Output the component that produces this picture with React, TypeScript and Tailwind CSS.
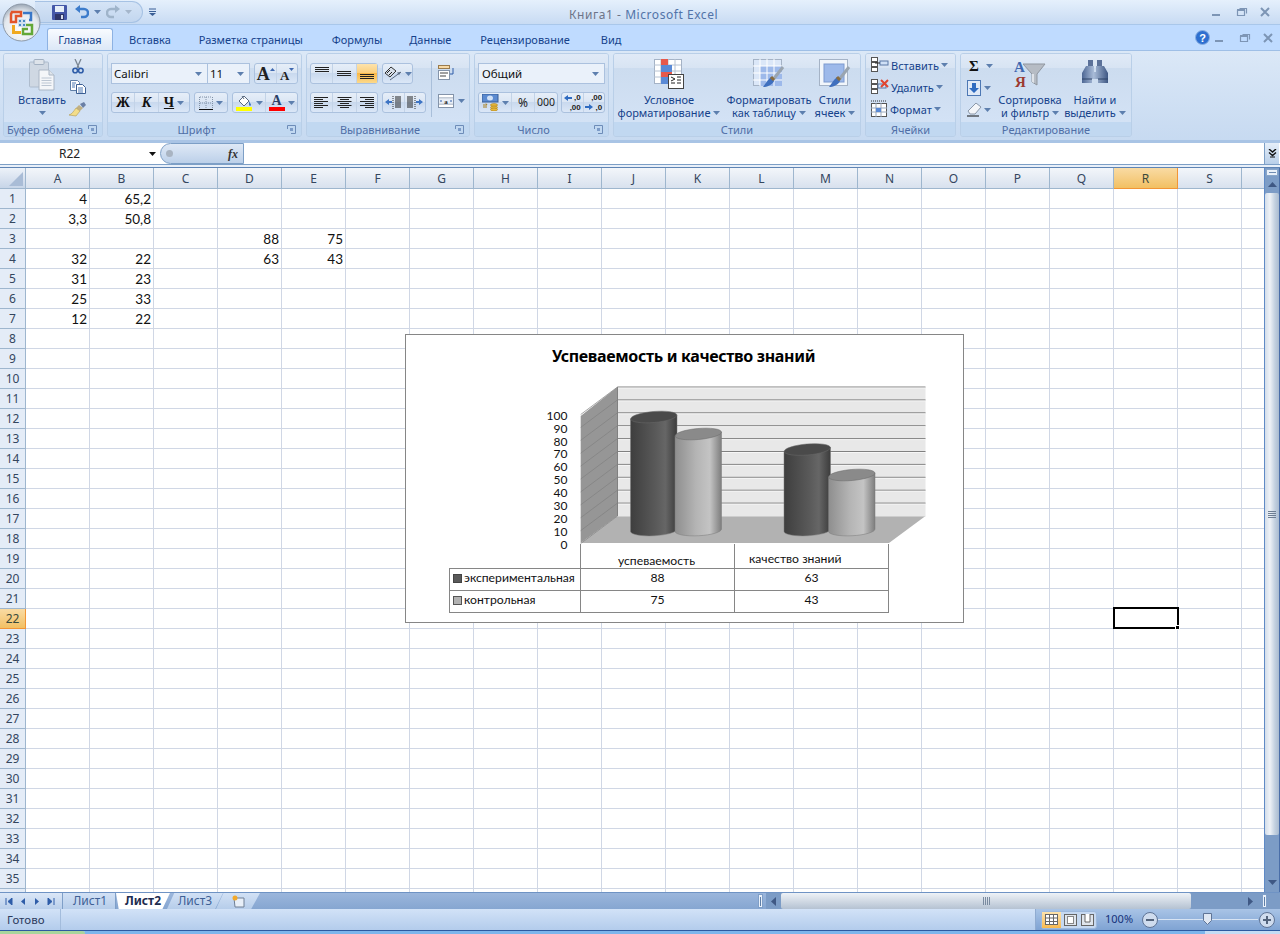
import React from "react";

const columns = "ABCDEFGHIJKLMNOPQRST".split("");
const rows = Array.from({ length: 36 }, (_, i) => i + 1);

// значения ячеек
const cells: Record<string, string> = {
  A1: "4", B1: "65,2",
  A2: "3,3", B2: "50,8",
  D3: "88", E3: "75",
  A4: "32", B4: "22", D4: "63", E4: "43",
  A5: "31", B5: "23",
  A6: "25", B6: "33",
  A7: "12", B7: "22",
};

function Caret({ color = "#5d7fae" }: { color?: string }) {
  return (
    <svg width="7" height="4" viewBox="0 0 7 4" className="shrink-0">
      <path d="M0 0h7L3.5 4z" fill={color} />
    </svg>
  );
}

function Launcher() {
  return (
    <svg width="9" height="9" viewBox="0 0 9 9" className="absolute right-[5px] top-[3px]">
      <path d="M.5 4V.5H8.5V8.5H4" fill="none" stroke="#6d8cb8" />
      <rect x="3" y="3" width="3" height="3" fill="#7d9cc8" />
    </svg>
  );
}

function Group({ w, label, launcher, children }: { w: string; label: string; launcher?: boolean; children: React.ReactNode }) {
  return (
    <div className={`${w} h-[84px] shrink-0 flex flex-col rounded-[3px] border border-[#b9cfe8] overflow-hidden`}>
      <div className="h-[68px] shrink-0 bg-[linear-gradient(to_bottom,#e0eaf7_0%,#d8e4f3_20%,#ccdcef_21%,#d3e2f5_100%)]">
        {children}
      </div>
      <div className={`relative flex-1 bg-[#c1d8f1] text-center text-[11px] leading-[15px] text-[#4f6ea6] ${launcher ? "pr-[16px]" : ""}`}>
        {label}
        {launcher && <Launcher />}
      </div>
    </div>
  );
}

function BtnGroup({ className = "", children }: { className?: string; children: React.ReactNode }) {
  return (
    <div className={`h-[21px] flex items-stretch rounded-[3px] border border-[#abc1de] bg-[linear-gradient(to_bottom,#e6eef8_0%,#dbe6f4_45%,#c9d9ee_50%,#dbe7f7_100%)] ${className}`}>
      {children}
    </div>
  );
}

function Cell({ w, active, children }: { w: string; active?: boolean; children: React.ReactNode }) {
  return (
    <div
      className={`${w} flex items-center justify-center gap-[3px] border-r border-[#c3d3e7] last:border-r-0 ${
        active ? "bg-[linear-gradient(to_bottom,#fde3ac_0%,#fbd07f_45%,#f9b848_50%,#fcd98c_100%)]" : ""
      }`}
    >
      {children}
    </div>
  );
}

// линии выравнивания
function Lines({ widths, offset = 0 }: { widths: number[]; offset?: number }) {
  return (
    <svg width="14" height="13" viewBox="0 0 14 13">
      {widths.map((w, i) => (
        <rect key={i} x={(14 - w) / 2} y={offset + i * 2} width={w} height="1" fill="#222" />
      ))}
    </svg>
  );
}

function AlignH({ side }: { side: "l" | "c" | "r" }) {
  const ws = [14, 9, 14, 9, 14, 9];
  return (
    <svg width="15" height="13" viewBox="0 0 15 13">
      {ws.map((w, i) => (
        <rect key={i} x={side === "l" ? 0 : side === "r" ? 15 - w : (15 - w) / 2} y={i * 2 + 1} width={w} height="1" fill="#222" />
      ))}
    </svg>
  );
}

function Indent({ flip }: { flip?: boolean }) {
  return (
    <svg width="16" height="15" viewBox="0 0 16 15">
      <g transform={flip ? "translate(16 0) scale(-1 1)" : undefined}>
        <path d="M8 1v13" stroke="#333" strokeDasharray="1 1" />
        <path d="M10 2h6M10 4h6M10 6h6M10 8h6M10 10h6M10 12h6" stroke="#222" />
        <path d="M0 7l4-3v2h3v2H4v2z" fill="#3d74c4" />
      </g>
    </svg>
  );
}

function Paste() {
  return (
    <svg width="26" height="32" viewBox="0 0 26 32">
      <rect x="0.5" y="3" width="19" height="25" rx="1" fill="#cfd8e3" stroke="#aebccd" />
      <rect x="5" y="0.5" width="10" height="5" rx="1" fill="#dde3ea" stroke="#a3b1c2" />
      <path d="M10 11h10l5 5v15H10z" fill="#f4f6f9" stroke="#aab6c5" />
      <path d="M20 11v5h5" fill="#dfe5ec" stroke="#aab6c5" />
      <path d="M12.500 19h10M12.500 21.500h10M12.500 24h10M12.500 26.500h10" stroke="#bcc6d3" />
    </svg>
  );
}

function Scissors() {
  return (
    <svg width="12" height="15" viewBox="0 0 12 15">
      <path d="M3 0l4 9M9 0L5 9" stroke="#7b8794" strokeWidth="1.300" />
      <circle cx="3.200" cy="11.500" r="2.300" fill="none" stroke="#2f5da8" strokeWidth="1.600" />
      <circle cx="8.800" cy="11.500" r="2.300" fill="none" stroke="#2f5da8" strokeWidth="1.600" />
    </svg>
  );
}

function CopyIcon() {
  return (
    <svg width="16" height="14" viewBox="0 0 16 14">
      <path d="M.5.500h7l2 2v8h-9z" fill="#fff" stroke="#5f7fa8" />
      <path d="M6.500 4.500h6l3 3v6h-9z" fill="#fff" stroke="#3c5f93" />
      <path d="M2 3h4M2 5h3M2 7h3M8 8h5M8 10h5M8 12h5" stroke="#4d78b4" />
    </svg>
  );
}

function Brush() {
  return (
    <svg width="17" height="15" viewBox="0 0 17 15">
      <path d="M11 2l4-2 2 3-3 3z" fill="#6a7fa5" />
      <path d="M10 3l4 3-3 3-4-3z" fill="#c0b084" />
      <path d="M7 6l4 3-4 5-7-1c3-1 4-3 7-7z" fill="#f3dd8a" stroke="#b29a4f" strokeWidth=".6" />
    </svg>
  );
}

function Borders() {
  return (
    <svg width="14" height="14" viewBox="0 0 14 14">
      <path d="M.5 1v12M7 1v12M13.500 1v12M1 1h12M1 7h12" stroke="#8292a7" strokeDasharray="1 1" />
      <path d="M0 13.500h14" stroke="#111" />
    </svg>
  );
}

function FillColor() {
  return (
    <svg width="17" height="17" viewBox="0 0 17 17">
      <path d="M3 7l5-5 5 5-5 5z" fill="#fff" stroke="#5a6a80" />
      <path d="M6 2l2 3" stroke="#5a6a80" />
      <path d="M13 7c1 2 2 3 2 4s-2 1-2 0z" fill="#3d74c4" />
      <rect x="0" y="13" width="16" height="4" fill="#ffff00" />
    </svg>
  );
}

function RotateIcon() {
  return (
    <svg width="18" height="15" viewBox="0 0 18 15">
      <path d="M1 7l6-6 5 4-6 6z" fill="#d7dfe9" stroke="#333" />
      <path d="M3 7l3-3M5 9l3-3" stroke="#222" />
      <path d="M6 14L17 6" stroke="#5a6a80" />
      <path d="M17 6l-4 .5 2 2.500z" fill="#5a6a80" />
    </svg>
  );
}

function WrapIcon() {
  return (
    <svg width="16" height="15" viewBox="0 0 16 15">
      <rect x="0.500" y="0.500" width="11" height="3" fill="#f7d9a5" stroke="#9a7b4d" />
      <rect x="0.500" y="5.500" width="11" height="9" fill="#fff" stroke="#8494aa" />
      <path d="M2 8h8M2 11h6" stroke="#444" />
      <path d="M15 3v6h-3" fill="none" stroke="#2f5da8" />
    </svg>
  );
}

function MergeIcon() {
  return (
    <svg width="16" height="14" viewBox="0 0 16 14">
      <rect x="0.500" y="0.500" width="15" height="13" fill="#fff" stroke="#8494aa" />
      <path d="M0 4h16M0 10h16" stroke="#8494aa" />
      <rect x="1" y="4.500" width="14" height="5" fill="#e8eef6" />
      <text x="8" y="9.500" textAnchor="middle" fontSize="7" fontWeight="700" fontFamily="Liberation Serif" fill="#222">a</text>
      <path d="M2 7h2M12 7h2" stroke="#2f5da8" />
    </svg>
  );
}

function MoneyIcon() {
  return (
    <svg width="17" height="17" viewBox="0 0 17 17">
      <rect x="0" y="0" width="16" height="8" fill="#5b8ad0" stroke="#365c96" />
      <ellipse cx="8" cy="4" rx="3" ry="2.500" fill="#cfe0f6" />
      <ellipse cx="12" cy="11" rx="3.500" ry="1.500" fill="#e8b83a" stroke="#a77f1d" strokeWidth=".6" />
      <ellipse cx="12" cy="13.500" rx="3.500" ry="1.500" fill="#e8b83a" stroke="#a77f1d" strokeWidth=".6" />
      <ellipse cx="12" cy="15.500" rx="3.500" ry="1.500" fill="#e8b83a" stroke="#a77f1d" strokeWidth=".6" />
      <path d="M1 11h4l-1-1.500M1 13h4" stroke="#a77f1d" fill="none" />
    </svg>
  );
}

function DecimalIcon({ down }: { down?: boolean }) {
  return (
    <div className="relative w-[17px] h-[19px] font-['Liberation_Sans',sans-serif] text-[8px] leading-[9.500px] font-bold text-[#222] text-right">
      <div>{down ? ",00" : ",0"}</div>
      <div>{down ? ",0" : ",00"}</div>
      <svg width="8" height="6" viewBox="0 0 8 6" className={`absolute left-0 ${down ? "bottom-[2px]" : "top-[2px]"}`}>
        <path d={down ? "M8 3L4 0v2H0v2h4v2z" : "M0 3l4-3v2h4v2H4v2z"} fill="#2f6bc0" />
      </svg>
    </div>
  );
}

function CondFormat() {
  return (
    <svg width="30" height="30" viewBox="0 0 30 30">
      <rect x="0.500" y="0.500" width="27" height="24" fill="#fff" stroke="#a5b3c6" />
      <path d="M0 6h27M0 12h27M0 18h27M7 0v25M14 0v25M21 0v25" stroke="#b6c2d2" />
      <rect x="7" y="0" width="7" height="6" fill="#e8594b" />
      <rect x="7" y="6" width="11" height="7" fill="#5a8ad6" />
      <rect x="7" y="13" width="11" height="5" fill="#e8594b" />
      <rect x="7" y="18" width="7" height="7" fill="#5a8ad6" />
      <rect x="14.500" y="15.500" width="15" height="14" fill="#fff" stroke="#444" />
      <path d="M17 18l4 2-4 2M17 24h4M23 18h4M23 21h4M23 24h4" stroke="#222" fill="none" />
    </svg>
  );
}

function FormatTable() {
  return (
    <svg width="32" height="30" viewBox="0 0 32 30">
      <rect x="0.500" y="0.500" width="28" height="26" fill="#dbe7f8" stroke="#a5b3c6" />
      <rect x="7" y="7" width="22" height="20" fill="#9db9ea" />
      <path d="M0 7h29M0 14h29M0 21h29M7 0v27M14 0v27M21 0v27" stroke="#fff" />
      <path d="M30 8L19 22" stroke="#9aa5b0" strokeWidth="3" />
      <path d="M20 20l-2-2-3 3-5 7c4 0 9-2 11-6z" fill="#3f6fbe" />
      <path d="M18 18l3 3" stroke="#8a6c3e" strokeWidth="3" />
    </svg>
  );
}

function CellStyles() {
  return (
    <svg width="32" height="30" viewBox="0 0 32 30">
      <rect x="0.500" y="0.500" width="28" height="26" fill="#f2f6fb" stroke="#a5b3c6" />
      <rect x="5" y="5" width="20" height="18" fill="#9db9ea" stroke="#7d9ad0" />
      <path d="M30 8L19 22" stroke="#9aa5b0" strokeWidth="3" />
      <path d="M20 20l-2-2-3 3-5 7c4 0 9-2 11-6z" fill="#3f6fbe" />
      <path d="M18 18l3 3" stroke="#8a6c3e" strokeWidth="3" />
    </svg>
  );
}

function InsertIcon() {
  return (
    <svg width="18" height="16" viewBox="0 0 18 16">
      <rect x="0.500" y="0.500" width="6" height="4" fill="#fff" stroke="#555" />
      <rect x="0.500" y="5.500" width="6" height="4" fill="#fff" stroke="#555" />
      <rect x="0.500" y="10.500" width="6" height="4" fill="#fff" stroke="#555" />
      <rect x="9" y="4" width="8" height="4" fill="#cfe0f6" stroke="#5a78a6" />
      <path d="M4 6h5" stroke="#222" />
    </svg>
  );
}

function DeleteIcon() {
  return (
    <svg width="18" height="16" viewBox="0 0 18 16">
      <rect x="0.500" y="0.500" width="6" height="4" fill="#fff" stroke="#555" />
      <rect x="0.500" y="5.500" width="6" height="4" fill="#fff" stroke="#555" />
      <rect x="0.500" y="10.500" width="6" height="4" fill="#fff" stroke="#555" />
      <rect x="7" y="5" width="8" height="4" fill="#cfe0f6" stroke="#5a78a6" />
      <path d="M10 1l7 7M17 1l-7 7" stroke="#e2442f" strokeWidth="2" />
    </svg>
  );
}

function FormatIcon() {
  return (
    <svg width="17" height="18" viewBox="0 0 17 18">
      <path d="M0 1h16" stroke="#333" strokeDasharray="1 1" />
      <rect x="0.500" y="3.500" width="15" height="13" fill="#fff" stroke="#555" />
      <path d="M0 8h16M0 12h16M5 3v14M10 3v14" stroke="#98a7bb" />
      <rect x="5" y="8" width="5" height="4" fill="#5a8ad6" />
    </svg>
  );
}

function FillDown() {
  return (
    <svg width="14" height="16" viewBox="0 0 14 16">
      <rect x="0.500" y="0.500" width="13" height="15" fill="#dfe9f7" stroke="#4d78b4" />
      <path d="M5 3h4v5h3l-5 5-5-5h3z" fill="#2f6bc0" />
    </svg>
  );
}

function Eraser() {
  return (
    <svg width="15" height="14" viewBox="0 0 15 14">
      <path d="M9 0l5 4-6 7H3L1 8z" fill="#f4f6f9" stroke="#8a97a8" />
      <path d="M0 13h12" stroke="#111" />
    </svg>
  );
}

function SortIcon() {
  return (
    <svg width="32" height="30" viewBox="0 0 32 30">
      <path d="M9 5h22L23 15v11l-5-3v-8z" fill="#b6bcc4" stroke="#8f969f" />
      <path d="M18 15v8l2 1V15z" fill="#dfe3e8" />
      <text x="0" y="13" fontSize="15" fontWeight="700" fontFamily="Liberation Serif" fill="#3f68b0">A</text>
      <text x="1" y="28" fontSize="15" fontWeight="700" fontFamily="Liberation Serif" fill="#9c3a30">Я</text>
    </svg>
  );
}

function FindIcon() {
  return (
    <svg width="28" height="28" viewBox="0 0 28 28">
      <defs>
        <linearGradient id="bino" x1="0" x2="1">
          <stop offset="0" stopColor="#4d6794" />
          <stop offset=".45" stopColor="#a9bcd8" />
          <stop offset="1" stopColor="#3f5884" />
        </linearGradient>
      </defs>
      <rect x="7" y="1" width="5" height="6" fill="#5b7199" />
      <rect x="16" y="1" width="5" height="6" fill="#5b7199" />
      <path d="M5 7h8v6h2V7h8l4 7v10H17v-4h-6v4H1V14z" fill="url(#bino)" />
      <path d="M1 20h10M17 20h10" stroke="#2f4468" />
    </svg>
  );
}

function WinButtons({ close = "#7d95b5" }: { close?: string }) {
  return (
    <div className="flex items-center">
      <svg width="22" height="14" viewBox="0 0 22 14">
        <rect x="5" y="9" width="8" height="2" fill={close} />
      </svg>
      <svg width="23" height="14" viewBox="0 0 23 14" className="ml-[1px]">
        <path d="M7.500 5.500h7v5h-7z M9.500 3.500h7v5" fill="none" stroke={close} strokeWidth="1.200" />
        <rect x="7" y="4" width="8" height="2" fill={close} />
      </svg>
      <svg width="24" height="14" viewBox="0 0 24 14" className="ml-[1px]">
        <path d="M7 3l8 8M15 3l-8 8" stroke={close} strokeWidth="2" />
      </svg>
    </div>
  );
}

function OfficeButton() {
  return (
    <svg width="44" height="44" viewBox="0 0 44 44" className="absolute left-0 top-[1px]">
      <defs>
        <radialGradient id="orb" cx=".5" cy=".65" r=".65">
          <stop offset="0" stopColor="#ffffff" />
          <stop offset=".7" stopColor="#e3e8ee" />
          <stop offset="1" stopColor="#9aa6b4" />
        </radialGradient>
      </defs>
      <circle cx="21.500" cy="21.500" r="18.500" fill="url(#orb)" stroke="#8d99a8" />
      <path d="M12 11h9v4h-5v6h-5v-8z" fill="none" stroke="#e2552b" strokeWidth="2.500" />
      <path d="M23 12h8v7h-2" fill="none" stroke="#3a78c8" strokeWidth="2.500" />
      <path d="M12 24h3v6h6v3h-9z" fill="#f0a91f" />
      <path d="M24 24h8v9h-9v-5h5" fill="none" stroke="#63a838" strokeWidth="2.500" />
      <path d="M18 18h8v8h-8z" fill="#cfe0ef" />
      <path d="M19 19h2v2h-2zM23 19h2v2h-2zM19 23h2v2h-2zM23 23h2v2h-2z" fill="#4a8bc4" />
    </svg>
  );
}

function TitleBar() {
  return (
    <div className="relative h-[25px] shrink-0 flex items-center pl-[35px] bg-linear-to-b from-[#e5f0fc] to-[#c8dbf3] border-b border-[#a9c7ea]">
      <div className="h-[22px] w-[108px] flex items-center pl-[17px] rounded-r-[11px] bg-linear-to-b from-[#d5e4f6] to-[#c2d6ef] border border-l-0 border-[#a6c2e4]">
        <svg width="15" height="15" viewBox="0 0 15 15">
          <rect width="15" height="15" rx="1" fill="#4457a8" />
          <rect x="3" y="1" width="9" height="6" fill="#e6eef8" />
          <rect x="3" y="9" width="9" height="6" fill="#2e3568" />
          <rect x="9" y="10" width="2" height="4" fill="#d7dcea" />
        </svg>
        <svg width="14" height="14" viewBox="0 0 14 14" className="ml-[8px]">
          <path d="M3 4h6a4 4 0 0 1 0 8H6" fill="none" stroke="#3d7ccb" strokeWidth="2.500" />
          <path d="M0 4l5-4v8z" fill="#3d7ccb" />
        </svg>
        <span className="ml-[5px]"><Caret /></span>
        <svg width="14" height="14" viewBox="0 0 14 14" className="ml-[5px]">
          <path d="M11 4H5a4 4 0 0 0 0 8h3" fill="none" stroke="#9fb4ca" strokeWidth="2.500" />
          <path d="M14 4L9 0v8z" fill="#9fb4ca" />
        </svg>
        <span className="ml-[5px]"><Caret color="#a5b6cb" /></span>
      </div>
      <svg width="7" height="8" viewBox="0 0 7 8" className="ml-[6px]">
        <path d="M0 1h7M0 3.500h7" stroke="#3a5f96" />
        <path d="M0 5h7L3.500 8z" fill="#3a5f96" />
      </svg>
      <div className="ml-[413px] mt-[6px] w-[500px] text-[12px] tracking-[0.55px] text-[#6d7488] whitespace-pre">
        Книга1 - <span className="text-[#5273a8]">Microsoft Excel</span>
      </div>
      <div className="ml-auto pr-[2px]">
        <WinButtons />
      </div>
    </div>
  );
}

function TabStrip() {
  const tabs = [
    { t: "Вставка", m: "ml-[16px]" },
    { t: "Разметка страницы", m: "ml-[28px]" },
    { t: "Формулы", m: "ml-[29px]" },
    { t: "Данные", m: "ml-[27px]" },
    { t: "Рецензирование", m: "ml-[29px]" },
    { t: "Вид", m: "ml-[31px]" },
  ];
  return (
    <div className="h-[25px] shrink-0 flex items-end pl-[47px] bg-[#bfdbff] text-[11px] text-[#15428b]">
      <div className="h-[22px] w-[66px] pt-[2px] flex items-center justify-center rounded-t-[3px] border border-b-0 border-[#8db2e3] bg-linear-to-b from-[#f8fbff] to-[#dce8f7]">
        Главная
      </div>
      {tabs.map((tab) => (
        <div key={tab.t} className={`${tab.m} h-[22px] pt-[2px] flex items-center whitespace-nowrap`}>
          {tab.t}
        </div>
      ))}
      <div className="ml-auto -mr-[1px] h-[25px] flex items-center">
        <svg width="15" height="15" viewBox="0 0 15 15">
          <circle cx="7.500" cy="7.500" r="7" fill="#2e6fd0" stroke="#88aee0" />
          <text x="7.500" y="11.500" textAnchor="middle" fontSize="11" fontWeight="700" fontFamily="Liberation Sans" fill="#fff">?</text>
        </svg>
        <WinButtons />
      </div>
    </div>
  );
}

function Ribbon() {
  return (
    <div className="h-[90px] shrink-0 flex gap-[4px] pl-[3px] pt-[2px] border-t border-[#9fbfe6] bg-linear-to-b from-[#dbe8f7] to-[#c7daf1] text-[11px] leading-[13px] text-[#15428b]">
      <Group w="w-[100px]" label="Буфер обмена" launcher>
        <div className="flex h-full">
          <div className="w-[76px] shrink-0 flex flex-col items-center pt-[5px]">
            <Paste />
            <div className="mt-[2px]">Вставить</div>
            <div className="mt-[5px]"><Caret /></div>
          </div>
          <div className="-ml-[11px] flex flex-col items-center pt-[5px]">
            <Scissors />
            <div className="mt-[6px]"><CopyIcon /></div>
            <div className="mt-[8px]"><Brush /></div>
          </div>
        </div>
      </Group>

      <Group w="w-[195px]" label="Шрифт" launcher>
        <div className="pl-[3px] pt-[9px] flex flex-col gap-[8px]">
          <div className="flex">
            <div className="w-[97px] h-[21px] flex items-center justify-between pl-[2px] pr-[5px] border border-[#abc1de] bg-[#eaf1fa] text-[11.500px] text-[#111]">
              Calibri
              <Caret />
            </div>
            <div className="w-[42px] h-[21px] flex items-center justify-between pl-[2px] pr-[5px] border border-l-0 border-[#abc1de] bg-[#eaf1fa] text-[11.500px] text-[#111]">
              11
              <Caret />
            </div>
            <BtnGroup className="ml-[4px] w-[44px]">
              <Cell w="w-[23px]">
                <span className="font-['Liberation_Serif'] font-bold text-[18px] leading-[18px] text-[#222]">A</span>
                <svg width="5" height="3" viewBox="0 0 5 3" className="-ml-[3px] mb-[9px]"><path d="M0 3l2.500-3L5 3z" fill="#3f68b0" /></svg>
              </Cell>
              <Cell w="w-[20px]">
                <span className="font-['Liberation_Serif'] font-bold text-[13px] leading-[13px] mt-[3px] text-[#222]">A</span>
                <svg width="5" height="3" viewBox="0 0 5 3" className="-ml-[3px] mb-[9px]"><path d="M0 0h5L2.500 3z" fill="#3f68b0" /></svg>
              </Cell>
            </BtnGroup>
          </div>
          <div className="flex">
            <BtnGroup className="w-[79px] font-['Liberation_Serif'] font-bold text-[14px] text-[#111]">
              <Cell w="w-[23px]">Ж</Cell>
              <Cell w="w-[24px]"><span className="italic">К</span></Cell>
              <Cell w="w-[30px]"><span className="underline">Ч</span><Caret /></Cell>
            </BtnGroup>
            <BtnGroup className="ml-[4px] w-[34px]">
              <Cell w="w-full"><Borders /><Caret /></Cell>
            </BtnGroup>
            <BtnGroup className="ml-[4px] w-[66px]">
              <Cell w="w-[33px]"><FillColor /><Caret /></Cell>
              <Cell w="w-[31px]">
                <div className="flex flex-col items-center">
                  <span className="font-['Liberation_Serif'] font-bold text-[14px] leading-[13px] text-[#2b3f66]">A</span>
                  <span className="w-[16px] h-[4px] bg-[#ff0000]" />
                </div>
                <Caret />
              </Cell>
            </BtnGroup>
          </div>
        </div>
      </Group>

      <Group w="w-[164px]" label="Выравнивание" launcher>
        <div className="flex pl-[3px] pt-[9px]">
          <div className="flex flex-col gap-[8px]">
            <div className="flex">
              <BtnGroup className="w-[68px]">
                <Cell w="w-[23px]"><Lines widths={[14, 14, 14]} /></Cell>
                <Cell w="w-[24px]"><Lines widths={[14, 14, 14]} offset={4} /></Cell>
                <Cell w="w-[21px]" active><Lines widths={[14, 14, 14]} offset={7} /></Cell>
              </BtnGroup>
              <BtnGroup className="ml-[4px] w-[31px]">
                <Cell w="w-full"><RotateIcon /><Caret /></Cell>
              </BtnGroup>
            </div>
            <div className="flex">
              <BtnGroup className="w-[68px]">
                <Cell w="w-[23px]"><AlignH side="l" /></Cell>
                <Cell w="w-[24px]"><AlignH side="c" /></Cell>
                <Cell w="w-[21px]"><AlignH side="r" /></Cell>
              </BtnGroup>
              <BtnGroup className="ml-[4px] w-[44px]">
                <Cell w="w-[22px]"><Indent /></Cell>
                <Cell w="w-[21px]"><Indent flip /></Cell>
              </BtnGroup>
            </div>
          </div>
          <div className="ml-[5px] mt-[-2px] w-px h-[56px] bg-[#a9bfda]" />
          <div className="flex flex-col items-start pl-[6px] gap-[14px] pt-[2px]">
            <WrapIcon />
            <div className="flex items-center gap-[4px]"><MergeIcon /><Caret /></div>
          </div>
        </div>
      </Group>

      <Group w="w-[135px]" label="Число" launcher>
        <div className="pl-[3px] pt-[9px] flex flex-col gap-[8px]">
          <div className="w-[127px] h-[21px] flex items-center justify-between pl-[3px] pr-[5px] border border-[#abc1de] bg-[#eaf1fa] text-[#111] text-[11.500px]">
            Общий
            <Caret />
          </div>
          <div className="flex">
            <BtnGroup className="w-[80px] text-[12px] text-[#222]">
              <Cell w="w-[33px]"><MoneyIcon /><Caret /></Cell>
              <Cell w="w-[23px]">%</Cell>
              <Cell w="w-[22px]"><span className="text-[10.500px]">000</span></Cell>
            </BtnGroup>
            <BtnGroup className="ml-[3px] w-[44px]">
              <Cell w="w-[22px]"><DecimalIcon /></Cell>
              <Cell w="w-[21px]"><DecimalIcon down /></Cell>
            </BtnGroup>
          </div>
        </div>
      </Group>

      <Group w="w-[248px]" label="Стили">
        <div className="flex h-full pt-[5px]">
          <div className="w-[110px] flex flex-col items-center">
            <div className="h-[34px]"><CondFormat /></div>
            <div>Условное</div>
            <div className="flex items-center gap-[3px] whitespace-nowrap">форматирование <Caret /></div>
          </div>
          <div className="w-[90px] flex flex-col items-center">
            <div className="h-[34px]"><FormatTable /></div>
            <div>Форматировать</div>
            <div className="flex items-center gap-[3px] whitespace-nowrap">как таблицу <Caret /></div>
          </div>
          <div className="w-[42px] flex flex-col items-center">
            <div className="h-[34px]"><CellStyles /></div>
            <div>Стили</div>
            <div className="flex items-center gap-[3px] whitespace-nowrap">ячеек <Caret /></div>
          </div>
        </div>
      </Group>

      <Group w="w-[91px]" label="Ячейки">
        <div className="flex flex-col pl-[5px]">
          <div className="h-[22px] flex items-center gap-[2px]"><InsertIcon />Вставить <Caret /></div>
          <div className="h-[22px] flex items-center gap-[2px]"><DeleteIcon />Удалить <Caret /></div>
          <div className="h-[22px] flex items-center gap-[2px]"><FormatIcon />Формат <Caret /></div>
        </div>
      </Group>

      <Group w="w-[172px]" label="Редактирование">
        <div className="flex h-full">
          <div className="w-[35px] flex flex-col pl-[6px] pt-[1px]">
            <div className="h-[22px] flex items-center gap-[5px]">
              <span className="w-[14px] font-['Liberation_Serif'] font-bold text-[15px] text-[#111] text-center">Σ</span>
              <Caret />
            </div>
            <div className="h-[22px] flex items-center gap-[3px]"><FillDown /><Caret /></div>
            <div className="h-[22px] flex items-center gap-[2px]"><Eraser /><Caret /></div>
          </div>
          <div className="w-[68px] flex flex-col items-center pt-[5px]">
            <div className="h-[34px]"><SortIcon /></div>
            <div>Сортировка</div>
            <div className="flex items-center gap-[3px] whitespace-nowrap">и фильтр <Caret /></div>
          </div>
          <div className="w-[62px] flex flex-col items-center pt-[5px]">
            <div className="h-[34px]"><FindIcon /></div>
            <div>Найти и</div>
            <div className="flex items-center gap-[3px] whitespace-nowrap">выделить <Caret /></div>
          </div>
        </div>
      </Group>
    </div>
  );
}

function FormulaBar() {
  return (
    <div className="h-[21px] shrink-0 flex bg-white">
      <div className="w-[160px] shrink-0 flex items-center pl-[59px] pr-[4px] justify-between text-[12px] text-[#222]">
        R22
        <Caret color="#111" />
      </div>
      <div className="w-[84px] shrink-0 flex items-center justify-between pl-[5px] pr-[5px] rounded-l-full border border-r border-[#7d9fc6] bg-linear-to-b from-[#dfe9f6] to-[#bcd0e9]">
        <span className="w-[7px] h-[7px] rounded-full bg-[#a9b4c2]" />
        <span className="font-['Liberation_Serif'] italic font-bold text-[12px] text-[#333]">fx</span>
      </div>
      <div className="flex-1" />
      <div className="w-[15px] mr-px flex items-center justify-center border-l border-[#7d9fc6] bg-linear-to-b from-[#e6eff9] to-[#b9cfe9]">
        <svg width="9" height="9" viewBox="0 0 9 9">
          <path d="M1 0l3.500 3L8 0M1 3.500l3.500 3 3.500-3" fill="none" stroke="#111" strokeWidth="1.400" />
          <path d="M2 8h5" stroke="#111" />
        </svg>
      </div>
    </div>
  );
}

function Grid() {
  return (
    <div className="flex-1 overflow-hidden bg-white font-['Lato','Noto_Sans',sans-serif] text-[13.500px] text-[#111]">
      <div className="flex h-[21px]">
        <div className="w-[26px] shrink-0 border-r border-b border-[#9eb6ce] bg-linear-to-b from-[#edf2f9] to-[#c7d5e8] flex items-end justify-end p-[2px]">
          <svg width="14" height="14" viewBox="0 0 14 14"><path d="M14 0v14H0z" fill="#a9bcd6" /></svg>
        </div>
        {columns.map((c) => (
          <div
            key={c}
            className={`w-16 shrink-0 pt-[1px] flex items-center justify-center border-r border-b font-['Noto_Sans',sans-serif] text-[12px] ${
              c === "R"
                ? "border-[#f29536] bg-linear-to-b from-[#f9dba3] to-[#f2c062] text-[#3a4a3a]"
                : "border-[#9eb6ce] bg-linear-to-b from-[#f3f6fa] to-[#d8e1ee] text-[#34465e]"
            }`}
          >
            {/* столбец T виден лишь краем, подпись уходит под полосу прокрутки */}
            {c === "T" ? "" : c}
          </div>
        ))}
      </div>
      {rows.map((r) => (
        <div key={r} className="flex h-5">
          <div
            className={`w-[26px] shrink-0 pt-[1px] flex items-center justify-center border-r border-b font-['Noto_Sans',sans-serif] text-[12px] ${
              r === 22
                ? "border-[#f29536] bg-linear-to-b from-[#f9dba3] to-[#f2c062] text-[#3a4a3a]"
                : "border-[#9eb6ce] bg-[#e4ecf7] text-[#34465e]"
            }`}
          >
            {r === 36 ? "" : r}
          </div>
          {columns.map((c) => (
            <div key={c} className="w-16 shrink-0 pt-[1px] flex items-center justify-end pr-[2px] border-r border-b border-[#d0d7e5]">
              {cells[c + r]}
            </div>
          ))}
        </div>
      ))}
    </div>
  );
}

function Cylinder({ x, top, color, cap }: { x: number; top: number; color: string; cap: string }) {
  const w = 46.500;
  const bottom = 530;
  return (
    <g>
      <path
        d={`M${x} ${top + 2} L${x} ${bottom + 1.500} A${w / 2} 5.500 -3 0 0 ${x + w} ${bottom - 1} L${x + w} ${top - 2} Z`}
        fill={`url(#${color})`}
        stroke="#7a7a7a"
        strokeWidth=".5"
      />
      <ellipse cx={x + w / 2} cy={top} rx={w / 2} ry="5.500" transform={`rotate(-5 ${x + w / 2} ${top})`} fill={cap} stroke="#6a6a6a" strokeWidth=".5" />
    </g>
  );
}

function ChartPlot() {
  const ticks = Array.from({ length: 11 }, (_, i) => i);
  return (
    <svg viewBox="406 374 557 170" width="557" height="170" className="block shrink-0 overflow-visible">
      <defs>
        <linearGradient id="darkCyl" x1="0" x2="1">
          <stop offset="0" stopColor="#3e3e3e" />
          <stop offset=".55" stopColor="#5a5a5a" />
          <stop offset=".75" stopColor="#666" />
          <stop offset="1" stopColor="#3c3c3c" />
        </linearGradient>
        <linearGradient id="lightCyl" x1="0" x2="1">
          <stop offset="0" stopColor="#8e8e8e" />
          <stop offset=".45" stopColor="#b4b4b4" />
          <stop offset=".75" stopColor="#c4c4c4" />
          <stop offset="1" stopColor="#7d7d7d" />
        </linearGradient>
      </defs>
      <rect x="617.500" y="387" width="308" height="129" fill="#e8e8e8" />
      <path d="M580.700 416 L617.500 387 V516 L580.700 543 Z" fill="#969696" />
      <path d="M580.700 543 L617.500 516 H925.500 L889 543 Z" fill="#b2b2b2" />
      {ticks.map((i) => {
        const y = 516 - i * 12.900;
        return (
          <g key={i} fill="none">
            <path d={`M617.500 ${y} H925.500`} stroke={i === 0 ? "#e8e8e8" : "#808080"} />
            {i > 0 && <path d={`M617.500 ${y + 1} H925.500`} stroke="#fff" strokeOpacity=".6" />}
            <path d={`M617.500 ${y} L580.700 ${y + 27.500}`} stroke="#808080" strokeOpacity=".7" />
          </g>
        );
      })}
      <path d="M617.500 387 V516" stroke="#808080" />
      <Cylinder x={630.500} top={417} color="darkCyl" cap="#4a4a4a" />
      <Cylinder x={675} top={434} color="lightCyl" cap="#8a8a8a" />
      <Cylinder x={784} top={449.500} color="darkCyl" cap="#4a4a4a" />
      <Cylinder x={828.500} top={475} color="lightCyl" cap="#8a8a8a" />
      {ticks.map((i) => (
        <text key={i} x="567.500" y={548.700 - i * 12.900} textAnchor="end" fontSize="12" fontFamily="Lato, Noto Sans, sans-serif" fill="#111">
          {i * 10}
        </text>
      ))}
    </svg>
  );
}

function Chart() {
  return (
    <div className="absolute left-[405px] top-[166px] w-[559px] h-[289px] flex flex-col border border-[#868686] bg-white font-['Lato','Noto_Sans',sans-serif] text-[12.200px] text-[#111]">
      <div className="h-[39px] shrink-0 pt-[11px] pr-[2px] text-center font-['Noto_Sans',sans-serif] font-bold text-[16px] leading-[20px] tracking-[-0.33px] text-black">
        Успеваемость и качество знаний
      </div>
      <ChartPlot />
      <div className="ml-[43px] grid grid-cols-[132px_154px_154px] grid-rows-[25px_22px_22px] w-[440px]">
        <div className="border-r border-b border-[#868686]" />
        <div className="border-r border-b border-[#868686] flex justify-center pt-[9px] pr-[2px] leading-[15px]">успеваемость</div>
        <div className="border-r border-b border-[#868686] pl-[14px] pt-[7px] leading-[15px]">качество знаний</div>
        <div className="border-l border-r border-b border-[#868686] flex items-center pl-[3px] pb-[2px] gap-[2px]">
          <span className="w-[9px] h-[9px] bg-[#595959] border border-[#444]" />
          экспериментальная
        </div>
        <div className="border-r border-b border-[#868686] flex items-center justify-center pb-[2px]">88</div>
        <div className="border-r border-b border-[#868686] flex items-center justify-center pb-[2px]">63</div>
        <div className="border-l border-r border-b border-[#868686] flex items-center pl-[3px] pb-[2px] gap-[2px]">
          <span className="w-[9px] h-[9px] bg-[#b2b2b2] border border-[#555]" />
          контрольная
        </div>
        <div className="border-r border-b border-[#868686] flex items-center justify-center pb-[2px]">75</div>
        <div className="border-r border-b border-[#868686] flex items-center justify-center pb-[2px]">43</div>
      </div>
    </div>
  );
}

function VScroll() {
  return (
    <div className="w-[16px] shrink-0 flex flex-col border-l border-[#5f8ac6] border-r border-r-[#4a6ea8] bg-[#7c9cc6]">
      <div className="h-[7px] mt-[1px] mx-[1px] border border-[#88a5c9] bg-[#e9f0f9] flex items-center justify-center">
        <span className="w-[7px] h-px bg-[#6f8cb2]" />
      </div>
      <div className="h-[17px] shrink-0 flex items-center justify-center">
        <svg width="9" height="5" viewBox="0 0 9 5"><path d="M0 5L4.500 0 9 5z" fill="#3f5884" /></svg>
      </div>
      <div className="h-[642px] shrink-0 flex items-center justify-center rounded-[2px] bg-[linear-gradient(to_right,#d3dde9_0%,#eef2f7_35%,#c3d1e0_70%,#a9bbd0_100%)]">
        <svg width="8" height="7" viewBox="0 0 8 7"><path d="M0 .5h8M0 2.500h8M0 4.500h8M0 6.500h8" stroke="#6d7e93" /></svg>
      </div>
      <div className="flex-1 flex items-end justify-center pb-[7px]">
        <svg width="9" height="5" viewBox="0 0 9 5"><path d="M0 0L4.500 5 9 0z" fill="#3f5884" /></svg>
      </div>
    </div>
  );
}

function SheetTabs() {
  const nav = [
    "M1 0v7M7 0L3 3.500 7 7z",
    "M6 0L2 3.500 6 7z",
    "M2 0l4 3.500L2 7z",
    "M1 0l4 3.500L1 7zM7 0v7",
  ];
  return (
    <div className="h-[17px] shrink-0 flex border-t border-[#6f93c4] font-['Noto_Sans',sans-serif] text-[12px] text-[#3e6095]">
      <div className="w-[62px] shrink-0 flex items-center bg-linear-to-b from-[#dbe7f7] to-[#b9cfeb]">
        {nav.map((d, i) => (
          <svg key={d} width="8" height="7" viewBox="0 0 8 7" className={i === 0 ? "ml-[5px]" : "ml-[6px]"}>
            <path d={d} fill="#2f5da8" stroke={d.startsWith("M1 0v") || d.endsWith("v7") ? "#2f5da8" : "none"} />
          </svg>
        ))}
      </div>
      <div className="w-[704px] shrink-0 flex bg-linear-to-b from-[#9bb6dc] to-[#86a6d1]">
        <div className="w-[54px] pl-[2px] flex items-center justify-center border-l border-r border-[#7f9fc8] bg-linear-to-b from-[#d2e1f5] to-[#b6cdea]">
          Лист1
        </div>
        <div className="w-[54px] flex items-center justify-center font-bold text-[#1d2c50] bg-white [clip-path:polygon(0_0,100%_0,86%_100%,5%_100%)]">
          Лист2
        </div>
        <div className="w-[56px] -ml-[3px] flex items-center justify-center bg-linear-to-b from-[#d2e1f5] to-[#b6cdea] [clip-path:polygon(13%_0,100%_0,86%_100%,0_100%)]">
          Лист3
        </div>
        <div className="w-[44px] -ml-[7px] flex items-center justify-center bg-linear-to-b from-[#d2e1f5] to-[#b6cdea] [clip-path:polygon(17%_0,100%_0,80%_100%,0_100%)]">
          <svg width="14" height="14" viewBox="0 0 14 14">
            <path d="M3 4h10v9H4z" fill="#e8eff8" stroke="#6f7f95" />
            <circle cx="4" cy="4" r="2.500" fill="#f2a92c" />
          </svg>
        </div>
        <div className="ml-auto mr-[3px] w-[5px] my-[1px] flex items-center justify-center border border-[#7f9fc8] bg-[#eaf1fa]">
          <span className="w-px h-[9px] bg-[#5f7fa8]" />
        </div>
      </div>
      <div className="flex-1 flex items-stretch bg-[#7c9cc6]">
        <div className="w-[15px] shrink-0 flex items-center justify-center">
          <svg width="5" height="9" viewBox="0 0 5 9"><path d="M5 0L0 4.500 5 9z" fill="#3f5884" /></svg>
        </div>
        <div className="w-[410px] shrink-0 flex items-center justify-center rounded-[2px] bg-linear-to-b from-[#eef2f7] to-[#b5c2d2]">
          <svg width="7" height="8" viewBox="0 0 7 8"><path d="M.5 0v8M2.500 0v8M4.500 0v8M6.500 0v8" stroke="#7a8ba0" /></svg>
        </div>
        <div className="flex-1 flex items-center justify-end pr-[9px]">
          <svg width="5" height="9" viewBox="0 0 5 9"><path d="M0 0l5 4.500L0 9z" fill="#3f5884" /></svg>
        </div>
        <div className="w-[5px] mr-[13px] my-[1px] flex items-center justify-center border border-[#7f9fc8] bg-[#eaf1fa]">
          <span className="w-px h-[9px] bg-[#5f7fa8]" />
        </div>
      </div>
    </div>
  );
}

function StatusBar() {
  return (
    <div className="h-[21px] shrink-0 flex text-[11.500px]">
      <div className="w-[1035px] shrink-0 flex bg-linear-to-b from-[#d2e2f7] to-[#b3ccec] text-[#2c3a5c]">
        <div className="w-[61px] flex items-center pl-[7px] border-r border-[#a3bcdc]">Готово</div>
      </div>
      <div className="flex-1 flex items-center bg-linear-to-b from-[#a9c4e6] to-[#7fa3d3] border-l border-[#8fabd0]">
        <div className="ml-[5px] w-[56px] h-[18px] flex rounded-[3px] border border-[#9eb9dc] bg-[#c6d9f1]">
          <div className="w-[19px] flex items-center justify-center bg-linear-to-b from-[#fde3ac] to-[#f8b94c]">
            <svg width="13" height="11" viewBox="0 0 13 11">
              <rect x=".5" y=".5" width="12" height="10" fill="#fff" stroke="#666" />
              <path d="M0 4h13M0 7.500h13M4.500 0v11M8.500 0v11" stroke="#666" />
            </svg>
          </div>
          <div className="w-[18px] flex items-center justify-center">
            <svg width="13" height="12" viewBox="0 0 13 12">
              <rect x=".5" y=".5" width="12" height="11" fill="#dfe5ec" stroke="#666" />
              <rect x="3.500" y="2.500" width="6" height="7" fill="#fff" stroke="#888" />
            </svg>
          </div>
          <div className="w-[17px] flex items-center justify-center">
            <svg width="13" height="12" viewBox="0 0 13 12">
              <rect x=".5" y=".5" width="12" height="11" fill="#dfe5ec" stroke="#666" />
              <path d="M4 0v8h5V0" fill="#fff" stroke="#666" />
            </svg>
          </div>
        </div>
        <span className="ml-[8px] text-[11px] text-[#15327a]">100%</span>
        <svg width="18" height="18" viewBox="0 0 18 18" className="ml-[8px]">
          <circle cx="9" cy="9" r="7.500" fill="#cfdcee" stroke="#5f7496" />
          <rect x="5" y="8" width="8" height="2" fill="#54647c" />
        </svg>
        <div className="relative w-[100px] h-px bg-[#d8e4f3] -mx-[1px]">
          <svg width="9" height="12" viewBox="0 0 9 12" className="absolute left-[45px] -top-[6px]">
            <path d="M.5.5h8v7L4.500 11.500.5 7.500z" fill="#dfe7f2" stroke="#5f7496" />
          </svg>
        </div>
        <svg width="18" height="18" viewBox="0 0 18 18" className="ml-[1px]">
          <circle cx="9" cy="9" r="7.500" fill="#cfdcee" stroke="#5f7496" />
          <path d="M5 8h3V5h2v3h3v2h-3v3H8v-3H5z" fill="#54647c" />
        </svg>
      </div>
    </div>
  );
}

export default function App() {
  return (
    <div className="relative w-[1280px] h-[934px] overflow-hidden flex flex-col bg-[#a9c4e5] font-['Noto_Sans',sans-serif]">
      <TitleBar />
      <TabStrip />
      <Ribbon />
      <div className="h-[3px] shrink-0 bg-[#a9c4e5]" />
      <FormulaBar />
      <div className="h-[4px] shrink-0 border-t border-[#7d9fc6] border-b border-b-[#5f84b4] bg-[#e9f0f9]" />
      <div className="relative flex h-[724px] shrink-0">
        <Grid />
        <VScroll />
        <Chart />
        <div className="absolute left-[1113px] top-[439px] w-[66px] h-[22px] border-2 border-black">
          <div className="absolute -right-[3px] -bottom-[3px] w-[5px] h-[5px] bg-black border border-white" />
        </div>
      </div>
      <SheetTabs />
      <StatusBar />
      <div className="flex-1 flex border-t border-[#2d5aa0] bg-[#8fc0ef]">
        <div className="w-[85px] rounded-tr-[4px] bg-[#a8d59c]" />
        <div className="flex-1 bg-[#7cb5ec]" />
        <div className="w-[75px] bg-[#c4dcf5]" />
      </div>
      <OfficeButton />
    </div>
  );
}
